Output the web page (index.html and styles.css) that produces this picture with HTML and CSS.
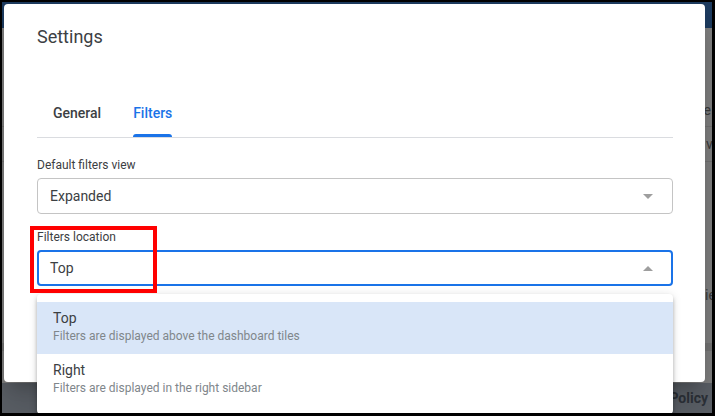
FILE: index.html
```html
<!DOCTYPE html>
<html lang="en">
<head>
<meta charset="utf-8">
<title>Settings</title>
<link rel="stylesheet" href="styles.css">
</head>
<body>
<div class="screen">
  <header class="app-header"></header>
  <main class="app-main">
    <div class="bg-row bg-row-1"><span class="bg-text">Theme</span></div>
    <div class="bg-row bg-row-2"><span class="bg-text">va</span></div>
    <div class="bg-row bg-row-3"><span class="bg-text">ie</span></div>
    <div class="bg-band"></div>
  </main>
  <footer class="app-footer"><span class="policy">Policy</span></footer>
  <div class="scrim"></div>

  <section class="dialog">
    <h1 class="dialog-title">Settings</h1>
    <nav class="tabs">
      <div class="tab">General</div>
      <div class="tab tab-active">Filters</div>
    </nav>
    <div class="form">
      <div class="field">
        <div class="field-label">Default filters view</div>
        <div class="select">
          <span class="select-value">Expanded</span>
          <span class="caret caret-down"></span>
        </div>
      </div>
      <div class="field field-second">
        <div class="field-label">Filters location</div>
        <div class="select-wrap">
          <div class="select select-open">
            <span class="select-value">Top</span>
            <span class="caret caret-up"></span>
          </div>
          <div class="menu">
            <div class="menu-item menu-item-active">
              <div class="menu-title">Top</div>
              <div class="menu-desc">Filters are displayed above the dashboard tiles</div>
            </div>
            <div class="menu-item">
              <div class="menu-title">Right</div>
              <div class="menu-desc">Filters are displayed in the right sidebar</div>
            </div>
          </div>
        </div>
      </div>
    </div>
  </section>

  <div class="callout"></div>
</div>
</body>
</html>
```

FILE: styles.css
```css
* {
  box-sizing: border-box;
}

html, body {
  margin: 0;
  padding: 0;
}

body {
  background: #000;
  font-family: Roboto, "Liberation Sans", Arial, sans-serif;
  width: 715px;
  height: 416px;
  overflow: hidden;
  padding: 2px 3px 3px 2px;
}

.screen {
  position: relative;
  width: 710px;
  height: 411px;
  overflow: hidden;
  background: #fff;
  display: flex;
  flex-direction: column;
}

.app-header {
  height: 26px;
  background: #3a76be;
  flex: none;
}

.app-main {
  flex: 1;
  background: #fff;
  display: flex;
  flex-direction: column;
}

.bg-row {
  display: flex;
  border-bottom: 1px solid #e4e4e4;
  font-size: 14px;
  line-height: 16px;
  color: #777;
  overflow: hidden;
  white-space: nowrap;
}

.bg-row-1 {
  height: 99px;
  align-items: flex-end;
  justify-content: flex-end;
  padding: 0 1px 8px 0;
}

.bg-row-2 {
  height: 35px;
  align-items: center;
  padding-left: 704px;
}

.bg-row-3 {
  height: 181px;
  align-items: flex-start;
  padding: 125px 0 0 703px;
  border-bottom: none;
}

.bg-band {
  height: 8px;
  background: #e6e6e6;
}

.app-footer {
  height: 30px;
  flex: none;
  background: #b6c0ce;
  display: flex;
  align-items: center;
  justify-content: flex-end;
  padding-right: 4px;
}

.policy {
  font-size: 14px;
  font-weight: 700;
  color: #5a6472;
}

.scrim {
  position: absolute;
  inset: 0;
  background: rgba(0, 0, 0, 0.5);
}

.dialog {
  position: absolute;
  left: 2px;
  top: 2px;
  width: 701px;
  height: 378px;
  background: #fff;
  border-radius: 4px;
  padding: 21px 32px 0 33px;
  box-shadow: 0 11px 15px -7px rgba(0, 0, 0, 0.2), 0 24px 38px 3px rgba(0, 0, 0, 0.14);
}

.dialog-title {
  margin: 0;
  font-size: 18px;
  line-height: 24px;
  font-weight: 400;
  color: #3c4043;
}

.tabs {
  margin-top: 40px;
  display: flex;
  border-bottom: 1px solid #dadce0;
}

.tab {
  position: relative;
  height: 48px;
  padding: 0 16px;
  display: flex;
  align-items: center;
  font-size: 14px;
  font-weight: 500;
  color: #3c4043;
}

.tab-active {
  color: #1a73e8;
}

.tab-active::after {
  content: "";
  position: absolute;
  left: 16px;
  right: 16px;
  bottom: 0;
  height: 3px;
  background: #1a73e8;
  border-radius: 3px 3px 0 0;
}

.form {
  margin-top: 19px;
}

.field-label {
  font-size: 12px;
  line-height: 16px;
  color: #3c4043;
  margin-bottom: 5px;
}

.field-second {
  margin-top: 15px;
}

.select {
  height: 36px;
  border: 1px solid #c4c4c4;
  border-radius: 4px;
  padding: 0 19px 0 12px;
  display: flex;
  align-items: center;
  justify-content: space-between;
  font-size: 14px;
  color: #3c4043;
}

.select-open {
  border: 2px solid #1a73e8;
  padding: 0 18px 0 11px;
}

.caret {
  width: 0;
  height: 0;
  border-left: 5px solid transparent;
  border-right: 5px solid transparent;
}

.caret-down {
  border-top: 5px solid #9e9e9e;
}

.caret-up {
  border-bottom: 5px solid #9e9e9e;
}

.select-wrap {
  position: relative;
}

.menu {
  position: absolute;
  left: 0;
  right: 0;
  top: calc(100% + 8px);
  background: #fff;
  border-radius: 4px;
  padding: 8px 0;
  z-index: 2;
  box-shadow: 0 2px 4px -1px rgba(0, 0, 0, 0.2), 0 4px 5px 0 rgba(0, 0, 0, 0.14), 0 1px 10px 0 rgba(0, 0, 0, 0.12);
}

.menu-item {
  height: 52px;
  padding: 6px 16px 0;
}

.menu-item-active {
  background: #d9e6f8;
}

.menu-title {
  font-size: 14px;
  line-height: 20px;
  color: #3c4043;
}

.menu-desc {
  font-size: 12px;
  line-height: 16px;
  color: #80868b;
}

.callout {
  position: absolute;
  left: 28px;
  top: 224px;
  width: 127px;
  height: 67px;
  border: 4px solid #ff0000;
  z-index: 3;
}
```
